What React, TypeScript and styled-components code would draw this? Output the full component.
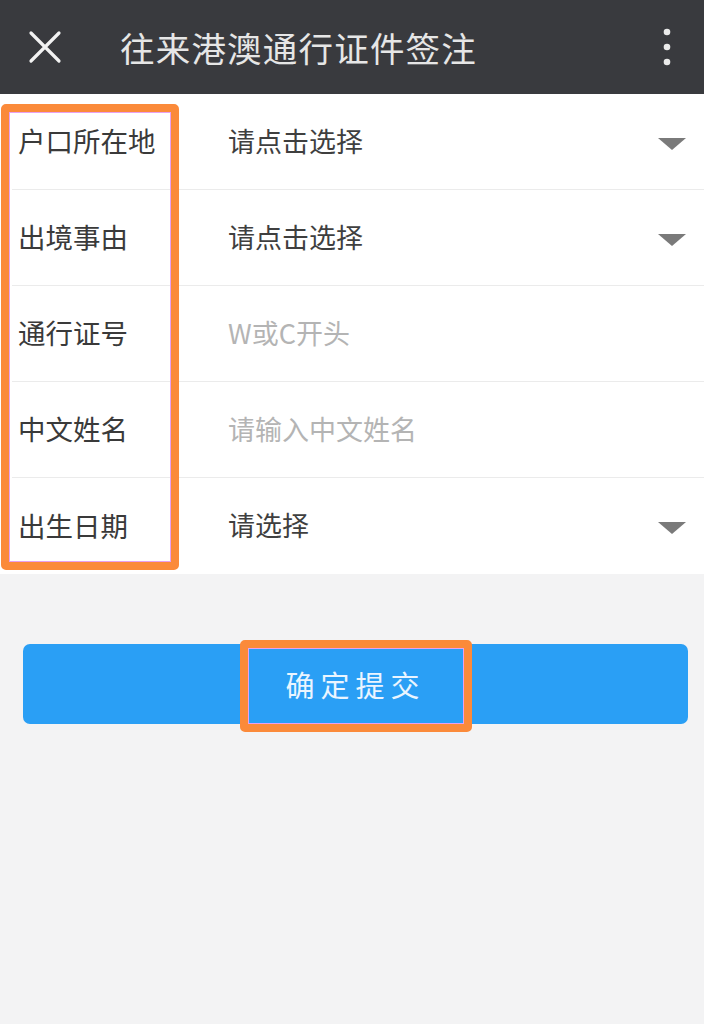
import React from 'react';
import styled, { createGlobalStyle } from 'styled-components';

const GlobalStyle = createGlobalStyle`
  html, body {
    margin: 0;
    padding: 0;
    background-color: #f3f3f4;
    font-family: "Noto Sans CJK SC", "Noto Sans", sans-serif;
  }
`;

const Page = styled.div`
  position: relative;
  width: 704px;
  min-height: 1024px;
  background-color: #f3f3f4;
`;

const Header = styled.header`
  height: 94px;
  background-color: #393a3e;
  display: flex;
  align-items: center;
  padding: 0 33px 0 28px;
  box-sizing: border-box;
`;

const Title = styled.h1`
  flex: 1;
  margin: 0 0 0 58px;
  font-size: 34.5px;
  font-weight: 400;
  color: #e6e6e6;
  letter-spacing: 1.2px;
`;

const IconButton = styled.div`
  display: flex;
  align-items: center;
  justify-content: center;
`;

const Form = styled.div`
  background-color: #fff;
`;

const Row = styled.div<{ $last?: boolean }>`
  height: 96px;
  margin-left: 12px;
  display: flex;
  align-items: center;
  border-bottom: ${p => (p.$last ? 'none' : '1px solid #ebebeb')};
  box-sizing: border-box;
`;

const Label = styled.div`
  width: 216px;
  padding: 0 0 3px 6px;
  font-size: 27.5px;
  color: #3a3a3a;
  box-sizing: border-box;
`;

const Value = styled.div<{ $placeholder?: boolean }>`
  flex: 1;
  padding-bottom: 3px;
  font-size: 27px;
  color: ${p => (p.$placeholder ? '#b4b4b4' : '#3f3f3f')};
`;

const Arrow = styled.div`
  width: 0;
  height: 0;
  margin: 4px 18px 0 0;
  border-left: 14px solid transparent;
  border-right: 14px solid transparent;
  border-top: 12px solid #7a7a7a;
`;

const ButtonWrap = styled.div`
  padding: 70px 16px 0 23px;
`;

const SubmitButton = styled.button`
  width: 100%;
  height: 80px;
  border: none;
  border-radius: 7px;
  background-color: #2a9ff5;
  color: #eaf5ff;
  font-family: "Noto Sans CJK SC", "Noto Sans", sans-serif;
  font-size: 29px;
  letter-spacing: 6px;
  padding-left: 6px;
`;

const Highlight = styled.div<{ $top: number; $left: number; $width: number; $height: number }>`
  position: absolute;
  top: ${p => p.$top}px;
  left: ${p => p.$left}px;
  width: ${p => p.$width}px;
  height: ${p => p.$height}px;
  border: 8px solid #fb8a3a;
  border-radius: 5px;
  box-sizing: border-box;
  box-shadow: inset 0 0 0 1px #e8a0f0;
  pointer-events: none;
`;

const rows = [
  { label: '户口所在地', value: '请点击选择', select: true },
  { label: '出境事由', value: '请点击选择', select: true },
  { label: '通行证号', value: 'W或C开头', placeholder: true },
  { label: '中文姓名', value: '请输入中文姓名', placeholder: true },
  { label: '出生日期', value: '请选择', select: true },
];

export default function App() {
  return (
    <>
      <GlobalStyle />
      <Page>
        <Header>
          <IconButton>
            <svg width="34" height="34" viewBox="0 0 34 34">
              <path d="M3 3 L31 31 M31 3 L3 31" stroke="#f2f2f2" strokeWidth="3.2" strokeLinecap="round" />
            </svg>
          </IconButton>
          <Title>往来港澳通行证件签注</Title>
          <IconButton>
            <svg width="8" height="40" viewBox="0 0 8 40">
              <circle cx="4" cy="5" r="3.3" fill="#eaeaea" />
              <circle cx="4" cy="20" r="3.3" fill="#eaeaea" />
              <circle cx="4" cy="35" r="3.3" fill="#eaeaea" />
            </svg>
          </IconButton>
        </Header>
        <Form>
          {rows.map((r, i) => (
            <Row key={r.label} $last={i === rows.length - 1}>
              <Label>{r.label}</Label>
              <Value $placeholder={r.placeholder}>{r.value}</Value>
              {r.select && <Arrow />}
            </Row>
          ))}
        </Form>
        <ButtonWrap>
          <SubmitButton>确定提交</SubmitButton>
        </ButtonWrap>
        <Highlight $top={104} $left={1} $width={178} $height={466} />
        <Highlight $top={640} $left={240} $width={232} $height={92} />
      </Page>
    </>
  );
}
